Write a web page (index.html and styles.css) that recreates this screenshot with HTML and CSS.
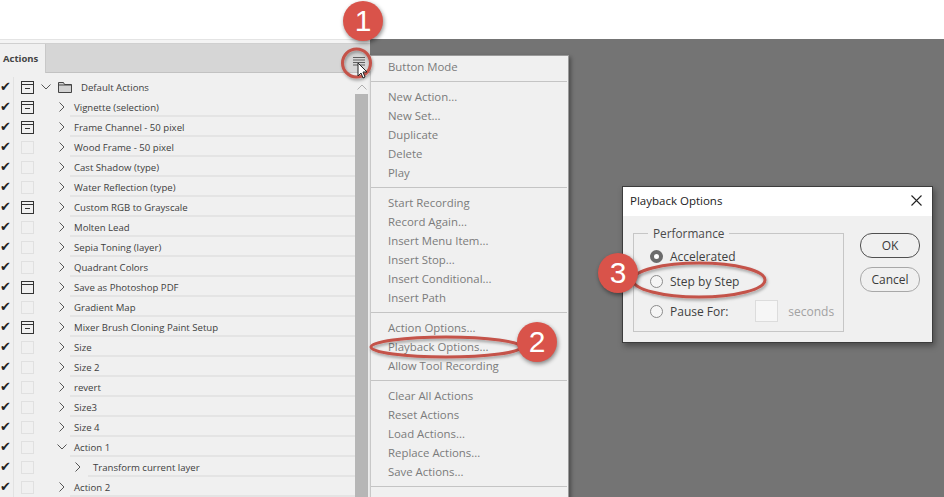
FILE: index.html
```html
<!DOCTYPE html>
<html lang="en">
<head>
<meta charset="utf-8">
<title>Playback Options</title>
<link rel="stylesheet" href="styles.css">
</head>
<body>
<div class="app">
  <div class="top"></div>
  <div class="main">
    <section class="panel">
      <div class="strip"></div>
      <header class="tabs">
        <div class="tab">Actions</div>
        <svg class="burger" width="12" height="9" viewBox="0 0 12 9"><path d="M0 .5h12M0 3h12M0 5.500h12M0 8h12" stroke="#5e5e5e" stroke-width="1"/></svg>
      </header>
      <div class="body">
        <div class="list">
          <div class="row"><span class="check">✔</span><span class="box dark"></span>
            <svg class="twist t-set" width="10" height="6" viewBox="0 0 10 6"><path d="M.5.500 5 5 9.500.5" class="chev"/></svg>
            <svg class="folder" width="14" height="11" viewBox="0 0 14 11"><path d="M.5 10.500V.5h5l1 2h7v8z M.5 3h13" fill="#d2d2d2" stroke="#444"/></svg>
            <span class="name n-set">Default Actions</span></div>
          <div class="row"><span class="check">✔</span><span class="box dark"></span><svg class="twist" width="6" height="10" viewBox="0 0 6 10"><path d="M.5.500 5 5 .5 9.500" class="chev"/></svg><span class="name">Vignette (selection)</span></div>
          <div class="row"><span class="check">✔</span><span class="box dark"></span><svg class="twist" width="6" height="10" viewBox="0 0 6 10"><path d="M.5.500 5 5 .5 9.500" class="chev"/></svg><span class="name">Frame Channel - 50 pixel</span></div>
          <div class="row"><span class="check">✔</span><span class="box"></span><svg class="twist" width="6" height="10" viewBox="0 0 6 10"><path d="M.5.500 5 5 .5 9.500" class="chev"/></svg><span class="name">Wood Frame - 50 pixel</span></div>
          <div class="row"><span class="check">✔</span><span class="box"></span><svg class="twist" width="6" height="10" viewBox="0 0 6 10"><path d="M.5.500 5 5 .5 9.500" class="chev"/></svg><span class="name">Cast Shadow (type)</span></div>
          <div class="row"><span class="check">✔</span><span class="box"></span><svg class="twist" width="6" height="10" viewBox="0 0 6 10"><path d="M.5.500 5 5 .5 9.500" class="chev"/></svg><span class="name">Water Reflection (type)</span></div>
          <div class="row"><span class="check">✔</span><span class="box dark"></span><svg class="twist" width="6" height="10" viewBox="0 0 6 10"><path d="M.5.500 5 5 .5 9.500" class="chev"/></svg><span class="name">Custom RGB to Grayscale</span></div>
          <div class="row"><span class="check">✔</span><span class="box"></span><svg class="twist" width="6" height="10" viewBox="0 0 6 10"><path d="M.5.500 5 5 .5 9.500" class="chev"/></svg><span class="name">Molten Lead</span></div>
          <div class="row"><span class="check">✔</span><span class="box"></span><svg class="twist" width="6" height="10" viewBox="0 0 6 10"><path d="M.5.500 5 5 .5 9.500" class="chev"/></svg><span class="name">Sepia Toning (layer)</span></div>
          <div class="row"><span class="check">✔</span><span class="box"></span><svg class="twist" width="6" height="10" viewBox="0 0 6 10"><path d="M.5.500 5 5 .5 9.500" class="chev"/></svg><span class="name">Quadrant Colors</span></div>
          <div class="row"><span class="check">✔</span><span class="box window"></span><svg class="twist" width="6" height="10" viewBox="0 0 6 10"><path d="M.5.500 5 5 .5 9.500" class="chev"/></svg><span class="name">Save as Photoshop PDF</span></div>
          <div class="row"><span class="check">✔</span><span class="box"></span><svg class="twist" width="6" height="10" viewBox="0 0 6 10"><path d="M.5.500 5 5 .5 9.500" class="chev"/></svg><span class="name">Gradient Map</span></div>
          <div class="row"><span class="check">✔</span><span class="box dark"></span><svg class="twist" width="6" height="10" viewBox="0 0 6 10"><path d="M.5.500 5 5 .5 9.500" class="chev"/></svg><span class="name">Mixer Brush Cloning Paint Setup</span></div>
          <div class="row"><span class="check">✔</span><span class="box"></span><svg class="twist" width="6" height="10" viewBox="0 0 6 10"><path d="M.5.500 5 5 .5 9.500" class="chev"/></svg><span class="name">Size</span></div>
          <div class="row"><span class="check">✔</span><span class="box"></span><svg class="twist" width="6" height="10" viewBox="0 0 6 10"><path d="M.5.500 5 5 .5 9.500" class="chev"/></svg><span class="name">Size 2</span></div>
          <div class="row"><span class="check">✔</span><span class="box"></span><svg class="twist" width="6" height="10" viewBox="0 0 6 10"><path d="M.5.500 5 5 .5 9.500" class="chev"/></svg><span class="name">revert</span></div>
          <div class="row"><span class="check">✔</span><span class="box"></span><svg class="twist" width="6" height="10" viewBox="0 0 6 10"><path d="M.5.500 5 5 .5 9.500" class="chev"/></svg><span class="name">Size3</span></div>
          <div class="row"><span class="check">✔</span><span class="box"></span><svg class="twist" width="6" height="10" viewBox="0 0 6 10"><path d="M.5.500 5 5 .5 9.500" class="chev"/></svg><span class="name">Size 4</span></div>
          <div class="row"><span class="check">✔</span><span class="box"></span><svg class="twist t-open" width="10" height="6" viewBox="0 0 10 6"><path d="M.5.500 5 5 9.500.5" class="chev"/></svg><span class="name n-open">Action 1</span></div>
          <div class="row"><span class="check">✔</span><span class="box"></span><svg class="twist t-step" width="6" height="10" viewBox="0 0 6 10"><path d="M.5.500 5 5 .5 9.500" class="chev"/></svg><span class="name n-step">Transform current layer</span></div>
          <div class="row"><span class="check">✔</span><span class="box"></span><svg class="twist" width="6" height="10" viewBox="0 0 6 10"><path d="M.5.500 5 5 .5 9.500" class="chev"/></svg><span class="name">Action 2</span></div>
        </div>
        <div class="scroll">
          <svg class="scroll-up" width="10" height="6" viewBox="0 0 10 6"><path d="M.5 5.500 5 1l4.500 4.500" fill="none" stroke="#b0b0b0"/></svg>
          <div class="thumb"></div>
        </div>
      </div>
    </section>
    <div class="canvas"></div>
  </div>

  <nav class="menu">
    <div class="group first"><div class="item">Button Mode</div></div>
    <div class="group">
      <div class="item">New Action...</div><div class="item">New Set...</div><div class="item">Duplicate</div><div class="item">Delete</div><div class="item">Play</div>
    </div>
    <div class="group">
      <div class="item">Start Recording</div><div class="item">Record Again...</div><div class="item">Insert Menu Item...</div><div class="item">Insert Stop...</div><div class="item">Insert Conditional...</div><div class="item">Insert Path</div>
    </div>
    <div class="group">
      <div class="item">Action Options...</div><div class="item">Playback Options...</div><div class="item">Allow Tool Recording</div>
    </div>
    <div class="group">
      <div class="item">Clear All Actions</div><div class="item">Reset Actions</div><div class="item">Load Actions...</div><div class="item">Replace Actions...</div><div class="item">Save Actions...</div>
    </div>
    <div class="group"></div>
  </nav>

  <div class="dialog">
    <div class="title">
      <span>Playback Options</span>
      <svg width="11" height="11" viewBox="0 0 11 11"><path d="M.5.500l10 10M10.500.5l-10 10" stroke="#222" stroke-width="1.100"/></svg>
    </div>
    <div class="dialog-body">
      <fieldset class="perf">
        <legend>Performance</legend>
        <label class="opt"><span class="radio on"></span>Accelerated</label>
        <label class="opt o2"><span class="radio"></span>Step by Step</label>
        <div class="opt o3"><span class="radio"></span>Pause For:<span class="num"></span><span class="secs">seconds</span></div>
      </fieldset>
      <div class="buttons">
        <div class="btn primary">OK</div>
        <div class="btn">Cancel</div>
      </div>
    </div>
  </div>

  <svg class="marks" width="944" height="497" viewBox="0 0 944 497">
    <defs><filter id="sh" x="-20%" y="-40%" width="140%" height="180%"><feDropShadow dx="1" dy="2" stdDeviation="1.500" flood-color="#000" flood-opacity=".35"/></filter></defs>
    <g fill="none" stroke="#c4524a" stroke-width="3" filter="url(#sh)">
      <ellipse cx="356.500" cy="63" rx="14" ry="14"/>
      <ellipse cx="446" cy="347" rx="75" ry="10"/>
      <ellipse cx="699" cy="280" rx="66" ry="17"/>
    </g>
    <path d="M358 63v13l3-3 2 5 2-1-2-5h4z" fill="#fff" stroke="#222"/>
  </svg>
  <div class="badge b1">1</div>
  <div class="badge b2">2</div>
  <div class="badge b3">3</div>
</div>
</body>
</html>
```
FILE: styles.css
```css
* { box-sizing: border-box; }
html, body { margin: 0; height: 100%; overflow: hidden; background: #fff; }
body { font-family: "Open Sans", "Noto Sans", sans-serif; font-size: 11px; color: #3a3a3a; }
.app { position: relative; width: 944px; height: 497px; display: flex; flex-direction: column; overflow: hidden; }
.top { height: 39px; background: #fff; flex: none; }
.main { flex: 1; display: flex; min-height: 0; }
.panel { width: 370px; flex: none; background: #f0f0f0; display: flex; flex-direction: column; min-height: 0; }
.strip { height: 5px; flex: none; background: #f4f4f4; border-top: 1px solid #e4e4e4; border-bottom: 1px solid #d0d0d0; }
.tabs { height: 29px; flex: none; background: #d6d6d6; display: flex; align-items: flex-start; justify-content: space-between; border-bottom: 1px solid #c2c2c2; padding-right: 5px; }
.tab { width: 46px; height: 29px; background: #f0f0f0; font-weight: 700; font-size: 9.500px; line-height: 29px; padding-left: 3px; color: #444; border-right: 1px solid #c8c8c8; }
.burger { margin-top: 13px; }
.body { flex: 1; display: flex; min-height: 0; padding-top: 4px; }
.list { width: 355px; flex: none; }
.row { height: 20px; display: flex; align-items: center; }
.check { width: 14px; flex: none; align-self: stretch; border-right: 1px solid #e2e2e2; font-size: 13px; line-height: 20px; color: #222; font-family: "DejaVu Sans", sans-serif; }
.box { width: 13px; height: 13px; margin-left: 7px; flex: none; border: 1px solid #e0e0e0; background: #f0f0f0; }
.box.dark, .box.window { border-color: #333; }
.box.dark { background: linear-gradient(#333, #333) center 2px / 100% 1px no-repeat, linear-gradient(#333, #333) center 6px / 5px 1px no-repeat, #f0f0f0; }
.box.window { background: linear-gradient(#333, #333) center 2px / 100% 1px no-repeat, #f0f0f0; }
.chev { fill: none; stroke: #555; stroke-width: 1; }
.twist { flex: none; margin-left: 25px; }
.t-set { margin-left: 7px; }
.t-open { margin-left: 23px; }
.t-step { margin-left: 41px; }
.folder { flex: none; margin-left: 7px; }
.name { flex: 1; height: 20px; margin-left: 5px; padding: 1px 0 0 4px; line-height: 20px; font-size: 9.600px; color: #3e3e3e; border-bottom: 2px solid #e4e4e4; white-space: nowrap; }
.n-set { border-bottom-color: transparent; }
.n-open { margin-left: 3px; }
.n-step { margin-left: 7px; padding-left: 5px; }
.scroll { width: 13px; flex: none; display: flex; flex-direction: column; align-items: center; padding-top: 7px; }
.scroll-up { flex: none; }
.thumb { width: 13px; flex: 1; margin-top: 4px; background: #b6b6b6; }
.canvas { flex: 1; background: #747474; }

.menu { position: absolute; left: 370px; top: 55px; width: 199px; height: 460px; background: #f0f0f0; border: 1px solid #9a9a9a; border-left-color: #c8c8c8; padding-top: 2px; box-shadow: 2px 2px 4px rgba(0, 0, 0, .35); }
.group { padding: 6px 0 4px; margin: 0 1px 0 0; border-bottom: 1px solid #c4c4c4; }
.group:last-child { border-bottom: 0; }
.group.first { padding: 0 0 4px; }
.item { height: 19px; line-height: 17px; padding-left: 17px; font-size: 11.400px; color: #7b7b7b; white-space: nowrap; }

.dialog { position: absolute; left: 622px; top: 186px; width: 311px; height: 157px; background: #f0f0f0; border: 1px solid #3c3c3c; box-shadow: 2px 3px 6px rgba(0, 0, 0, .35); }
.title { height: 29px; background: #fff; display: flex; align-items: center; justify-content: space-between; padding: 0 10px 2px 7px; font-size: 11.500px; color: #222; }
.dialog-body { display: flex; padding: 10px 12px 0 10px; gap: 16px; }
.perf { width: 213px; height: 106px; margin: 0; padding: 0 0 0 16px; border: 1px solid #c6c6c6; }
.perf legend { padding: 0 5px; margin-left: -2px; font-size: 11.800px; color: #4a4a4a; line-height: 14px; }
.opt { display: flex; align-items: center; height: 20px; font-size: 12px; color: #3f3f3f; }
.opt { margin-top: 6px; }
.o2 { margin-top: 5px; }
.o3 { margin-top: 10px; }
.radio { width: 13px; height: 13px; margin-right: 7px; border: 1px solid #8c8c8c; border-radius: 50%; background: #f5f5f5; flex: none; }
.radio.on { border: 4px solid #6b6b6b; background: #fff; }
.num { width: 23px; height: 22px; margin-left: 27px; background: #f6f6f6; border: 1px solid #dcdcdc; flex: none; }
.secs { margin-left: 10px; color: #a2a2a2; }
.buttons { display: flex; flex-direction: column; gap: 9px; padding-top: 7px; }
.btn { width: 60px; height: 25px; border: 1px solid #a8a8a8; border-radius: 12px; text-align: center; line-height: 23px; font-size: 12px; color: #3a3a3a; }
.btn.primary { border-color: #505050; }

.marks { position: absolute; left: 0; top: 0; pointer-events: none; }
.badge { position: absolute; width: 40px; height: 40px; border-radius: 50%; background: #d9534a; color: #fff; font-family: "Liberation Sans", sans-serif; font-size: 30px; display: flex; align-items: center; justify-content: center; box-shadow: 1px 2px 4px rgba(0, 0, 0, .45); }
.b1 { left: 343px; top: 1px; }
.b2 { left: 517px; top: 322px; }
.b3 { left: 598px; top: 253px; }
```
